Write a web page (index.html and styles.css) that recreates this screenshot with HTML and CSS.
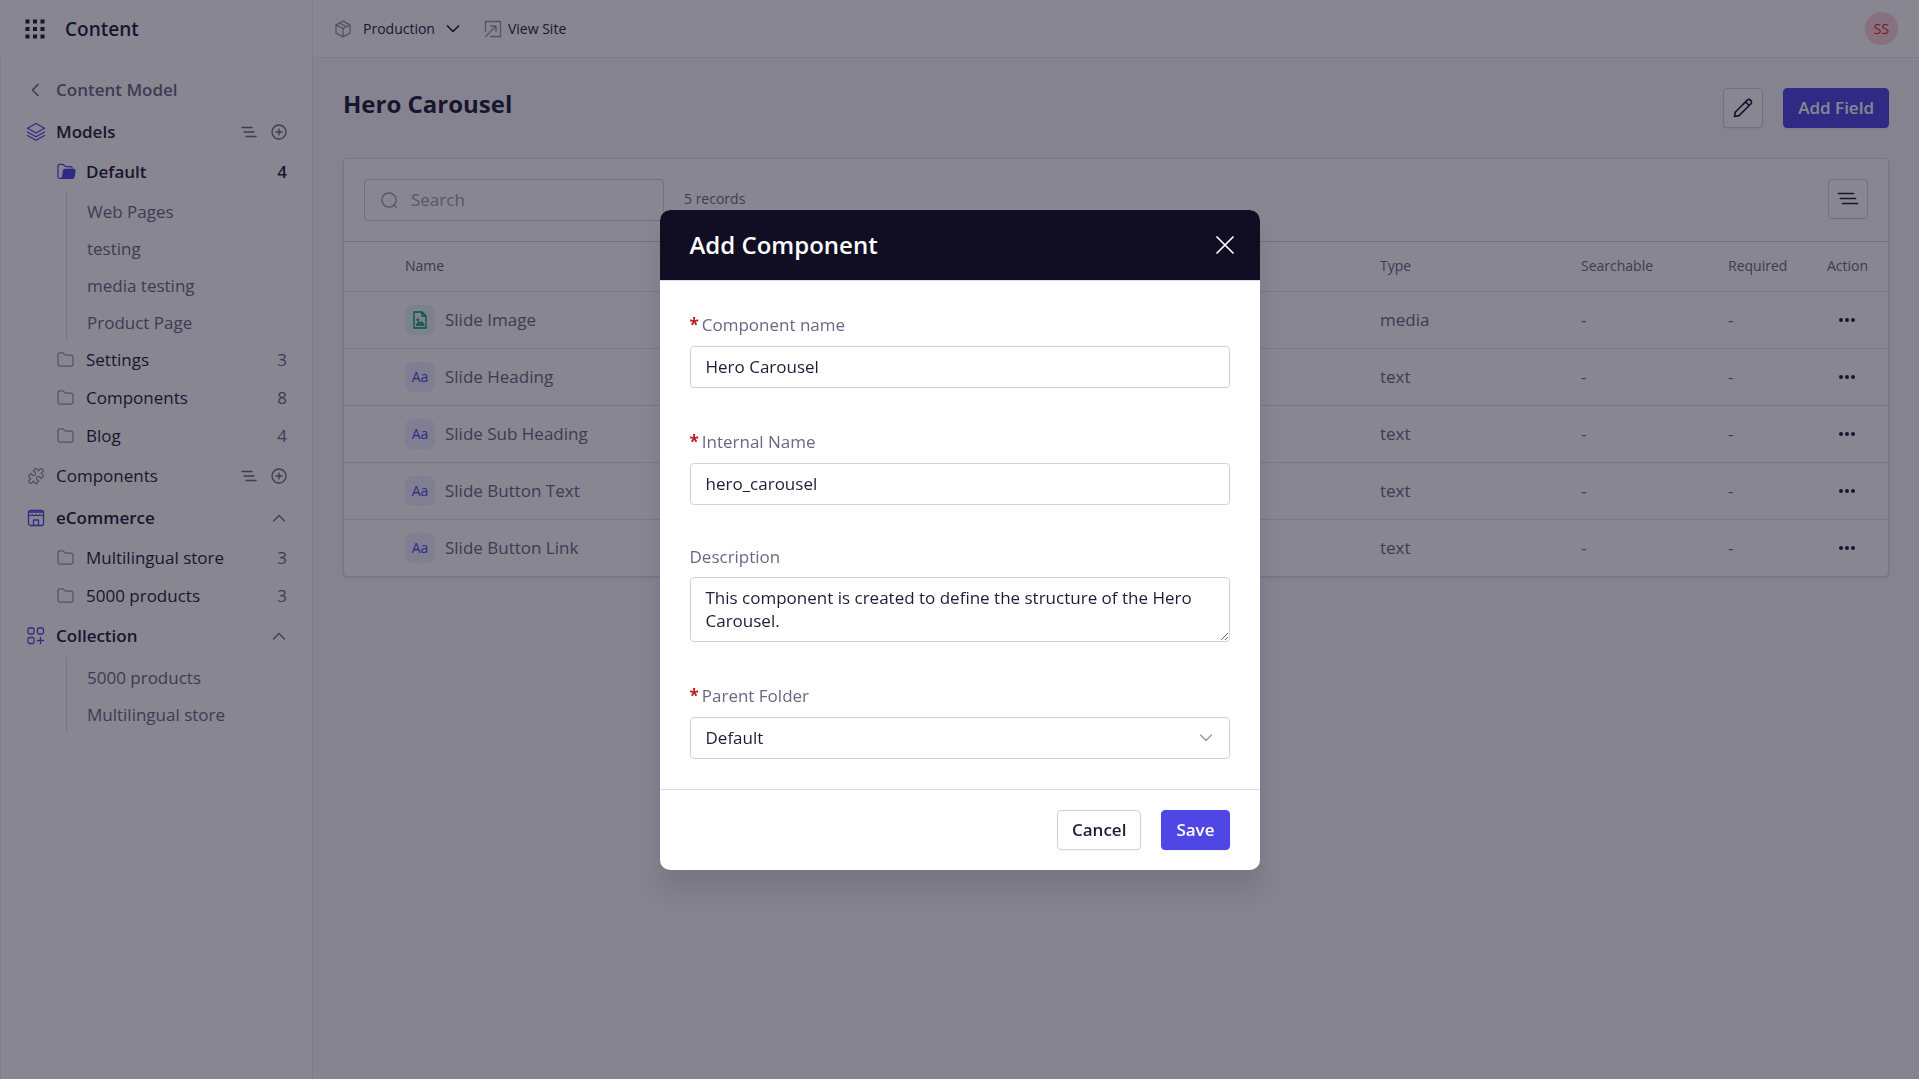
FILE: index.html
```
<!DOCTYPE html>
<html lang="en">
<head>
    <meta charset="UTF-8">
    <meta name="viewport" content="width=device-width, initial-scale=1.0">
    <title>Content - Hero Carousel</title>
    <link rel="stylesheet" href="styles.css">
</head>
<body>
    <!-- Shared icons -->
    <svg class="icon-defs" aria-hidden="true">
        <symbol id="icon-folder" viewBox="0 0 18 16">
            <path d="M1 3.2C1 1.9 1.7 1 3 1h2.6c.7 0 1.1.2 1.6.7l.9 1c.4.4.8.6 1.4.6H15c1.3 0 2 .8 2 2v7.500c0 1.300-.7 2.200-2 2.200H3c-1.300 0-2-.9-2-2.200z"/>
        </symbol>
        <symbol id="icon-sort" viewBox="0 0 16 12">
            <path d="M1 1.500h10M3 6h10M5 10.500h10"/>
        </symbol>
        <symbol id="icon-plus" viewBox="0 0 16 16">
            <circle cx="8" cy="8" r="7"/>
            <path d="M8 5v6M5 8h6"/>
        </symbol>
        <symbol id="icon-up" viewBox="0 0 14 8">
            <path d="M1.500 7 7 1.500 12.500 7"/>
        </symbol>
        <symbol id="icon-down" viewBox="0 0 14 8">
            <path d="M1.500 1 7 6.500 12.500 1"/>
        </symbol>
        <symbol id="icon-dots" viewBox="0 0 18 6">
            <circle cx="3" cy="3" r="2"/>
            <circle cx="9" cy="3" r="2"/>
            <circle cx="15" cy="3" r="2"/>
        </symbol>
    </svg>

    <div class="app">
        <aside class="sidebar">
            <div class="brand">
                <button class="icon-btn" aria-label="Apps">
                    <svg class="brand-icon" width="20" height="20" viewBox="0 0 20 20">
                        <path d="M.5.5h4v4h-4zM8 .5h4v4H8zM15.500.5h4v4h-4zM.5 8h4v4h-4zM8 8h4v4H8zM15.500 8h4v4h-4zM.5 15.500h4v4h-4zM8 15.500h4v4H8zM15.500 15.500h4v4h-4z"/>
                    </svg>
                </button>
                <span>Content</span>
            </div>

            <nav class="nav">
                <a href="#" class="back">
                    <svg class="icon" width="20" height="14" viewBox="0 0 20 14"><path d="M12 1.500 6.500 7 12 12.500"/></svg>
                    Content Model
                </a>

                <div class="nav-head">
                    <svg class="icon accent" width="20" height="20" viewBox="0 0 20 20">
                        <path d="M10 1.500 18.500 6.200 10 11 1.500 6.200zM1.500 10 10 14.700 18.500 10M1.500 13.500 10 18.300l8.500-4.800"/>
                    </svg>
                    <a href="#" class="nav-title bold">Models</a>
                    <button class="icon-btn" aria-label="Sort models"><svg class="icon" width="16" height="12"><use href="#icon-sort"/></svg></button>
                    <button class="icon-btn" aria-label="Add model"><svg class="icon" width="16" height="16"><use href="#icon-plus"/></svg></button>
                </div>
                <a href="#" class="folder active">
                    <svg class="icon accent" width="19" height="17" viewBox="0 0 20 17">
                        <path d="M4 15.800H3c-1.300 0-2-.9-2-2.200V3.200C1 1.900 1.700 1 3 1h2.600c.7 0 1.100.2 1.600.7l.9 1c.4.4.8.6 1.400.6H14c1.300 0 2 .8 2 2"/>
                        <path class="solid" d="M8 6.200h9.200c1.300 0 2 .8 1.800 2l-1 5.800c-.2 1.200-1 1.800-2 1.800H4c1.300 0 1.700-.8 1.900-2l.8-5.800c.1-1.200.3-1.800 1.300-1.800z"/>
                    </svg>
                    <span class="folder-name">Default</span>
                    <span class="count">4</span>
                </a>
                <div class="links">
                    <a href="#">Web Pages</a>
                    <a href="#">testing</a>
                    <a href="#">media testing</a>
                    <a href="#">Product Page</a>
                </div>
                <a href="#" class="folder">
                    <svg class="icon" width="17" height="15"><use href="#icon-folder"/></svg>
                    <span class="folder-name">Settings</span>
                    <span class="count">3</span>
                </a>
                <a href="#" class="folder">
                    <svg class="icon" width="17" height="15"><use href="#icon-folder"/></svg>
                    <span class="folder-name">Components</span>
                    <span class="count">8</span>
                </a>
                <a href="#" class="folder">
                    <svg class="icon" width="17" height="15"><use href="#icon-folder"/></svg>
                    <span class="folder-name">Blog</span>
                    <span class="count">4</span>
                </a>

                <div class="nav-head">
                    <svg class="icon" width="20" height="20" viewBox="0 0 20 20">
                        <path transform="rotate(45 10 10)" d="M5 4.500h2.800c.6 0 .8-.5.5-1a2 2 0 1 1 3.400 0c-.3.500-.1 1 .5 1H15q.5 0 .5.500v2.800c0 .6-.5.8-1 .5a2 2 0 1 0 0 3.400c.5-.3 1-.1 1 .5V15q0 .5-.5.5h-2.800c-.6 0-.8.5-.5 1a2 2 0 1 1-3.400 0c.3-.5.1-1-.5-1H5q-.5 0-.5-.5v-2.800c0-.6.5-.8 1-.5a2 2 0 1 0 0-3.400c-.5.3-1 .1-1-.5V5q0-.5.5-.5z"/>
                    </svg>
                    <a href="#" class="nav-title">Components</a>
                    <button class="icon-btn" aria-label="Sort components"><svg class="icon" width="16" height="12"><use href="#icon-sort"/></svg></button>
                    <button class="icon-btn" aria-label="Add component"><svg class="icon" width="16" height="16"><use href="#icon-plus"/></svg></button>
                </div>

                <div class="nav-head">
                    <svg class="icon accent" width="20" height="20" viewBox="0 0 20 20">
                        <rect x="2.500" y="2.500" width="15" height="15" rx="2"/>
                        <path d="M2.500 4h15M2.500 6.500c.8 1.600 2.600 1.600 3.700 0 1 1.600 2.800 1.600 3.800 0 1 1.600 2.800 1.600 3.800 0 1.100 1.600 2.900 1.600 3.700 0M7.500 17.500v-5.500h5v5.500"/>
                    </svg>
                    <a href="#" class="nav-title bold">eCommerce</a>
                    <button class="icon-btn" aria-label="Collapse eCommerce"><svg class="icon" width="14" height="8"><use href="#icon-up"/></svg></button>
                </div>
                <a href="#" class="folder">
                    <svg class="icon" width="17" height="15"><use href="#icon-folder"/></svg>
                    <span class="folder-name">Multilingual store</span>
                    <span class="count">3</span>
                </a>
                <a href="#" class="folder">
                    <svg class="icon" width="17" height="15"><use href="#icon-folder"/></svg>
                    <span class="folder-name">5000 products</span>
                    <span class="count">3</span>
                </a>

                <div class="nav-head">
                    <svg class="icon accent" width="20" height="20" viewBox="0 0 20 20">
                        <rect x="2" y="2" width="6" height="6" rx="1.500"/>
                        <rect x="11.500" y="2" width="6" height="6" rx="1.500"/>
                        <rect x="2" y="11.500" width="6" height="6" rx="1.500"/>
                        <path d="M14.500 11.500v6M11.500 14.500h6"/>
                    </svg>
                    <a href="#" class="nav-title bold">Collection</a>
                    <button class="icon-btn" aria-label="Collapse collection"><svg class="icon" width="14" height="8"><use href="#icon-up"/></svg></button>
                </div>
                <div class="links">
                    <a href="#">5000 products</a>
                    <a href="#">Multilingual store</a>
                </div>
            </nav>
        </aside>

        <div class="page">
            <header class="topbar">
                <button class="env-btn">
                    <svg class="icon" width="18" height="18" viewBox="0 0 18 18">
                        <path d="M9 1.200 16 4.800v8.400L9 16.800l-7-3.600V4.800zM2 4.800l7 3.600 7-3.600M9 8.400v8.400M5.500 3l7 3.600"/>
                    </svg>
                    Production
                    <svg class="icon dark" width="14" height="8"><use href="#icon-down"/></svg>
                </button>
                <a href="#" class="view-site">
                    <svg class="icon" width="18" height="18" viewBox="0 0 18 18">
                        <path d="M1.500 11.500v-10h15v15h-10M1.500 16.500l10.500-10.500M6.500 6H12v5.500"/>
                    </svg>
                    View Site
                </a>
                <button class="avatar">SS</button>
            </header>

            <main class="main">
                <div class="main-head">
                    <h1>Hero Carousel</h1>
                    <button class="square-btn" aria-label="Edit">
                        <svg class="icon dark" width="20" height="20" viewBox="0 0 20 20">
                            <path d="M1.500 18.500 2.400 14 14 2.300a2.600 2.600 0 0 1 3.700 3.700L6 17.600zM12.500 3.800l3.700 3.700"/>
                        </svg>
                    </button>
                    <button class="btn btn-primary">Add Field</button>
                </div>

                <div class="card">
                    <div class="toolbar">
                        <div class="search">
                            <svg class="icon" width="17" height="17" viewBox="0 0 18 18"><circle cx="8.500" cy="8.500" r="7.500"/><path d="m14 14 2.500 2.500"/></svg>
                            <input type="text" placeholder="Search" aria-label="Search">
                        </div>
                        <span class="records">5 records</span>
                        <button class="square-btn" aria-label="Sort fields">
                            <svg class="icon dark" width="22" height="14" viewBox="0 0 22 14"><path d="M1.500 1.500h15M3.500 6.500h15M5.500 11.500h15"/></svg>
                        </button>
                    </div>

                    <table class="fields">
                        <thead>
                            <tr>
                                <th class="col-name">Name</th>
                                <th class="col-type">Type</th>
                                <th class="col-search">Searchable</th>
                                <th class="col-required">Required</th>
                                <th class="col-action">Action</th>
                            </tr>
                        </thead>
                        <tbody>
                            <tr>
                                <td class="col-name">
                                    <div class="field-name">
                                        <span class="tag tag-media">
                                            <svg class="icon" width="14" height="18" viewBox="0 0 14 18">
                                                <path d="M1 1h8l4 4v12H1zM9 1v4h4M3.500 14l2.500-3 1.500 1.500L9 11l2 3z"/>
                                                <circle cx="4.800" cy="8.800" r=".7"/>
                                            </svg>
                                        </span>
                                        Slide Image
                                    </div>
                                </td>
                                <td>media</td>
                                <td>-</td>
                                <td>-</td>
                                <td class="col-action"><button class="icon-btn" aria-label="Actions"><svg class="dots" width="18" height="6"><use href="#icon-dots"/></svg></button></td>
                            </tr>
                            <tr>
                                <td class="col-name"><div class="field-name"><span class="tag">Aa</span>Slide Heading</div></td>
                                <td>text</td>
                                <td>-</td>
                                <td>-</td>
                                <td class="col-action"><button class="icon-btn" aria-label="Actions"><svg class="dots" width="18" height="6"><use href="#icon-dots"/></svg></button></td>
                            </tr>
                            <tr>
                                <td class="col-name"><div class="field-name"><span class="tag">Aa</span>Slide Sub Heading</div></td>
                                <td>text</td>
                                <td>-</td>
                                <td>-</td>
                                <td class="col-action"><button class="icon-btn" aria-label="Actions"><svg class="dots" width="18" height="6"><use href="#icon-dots"/></svg></button></td>
                            </tr>
                            <tr>
                                <td class="col-name"><div class="field-name"><span class="tag">Aa</span>Slide Button Text</div></td>
                                <td>text</td>
                                <td>-</td>
                                <td>-</td>
                                <td class="col-action"><button class="icon-btn" aria-label="Actions"><svg class="dots" width="18" height="6"><use href="#icon-dots"/></svg></button></td>
                            </tr>
                            <tr>
                                <td class="col-name"><div class="field-name"><span class="tag">Aa</span>Slide Button Link</div></td>
                                <td>text</td>
                                <td>-</td>
                                <td>-</td>
                                <td class="col-action"><button class="icon-btn" aria-label="Actions"><svg class="dots" width="18" height="6"><use href="#icon-dots"/></svg></button></td>
                            </tr>
                        </tbody>
                    </table>
                </div>
            </main>
        </div>
    </div>

    <!-- Add component dialog -->
    <div class="overlay">
        <form class="modal" role="dialog" aria-labelledby="modalTitle">
            <div class="modal-head">
                <h2 id="modalTitle">Add Component</h2>
                <button type="button" class="icon-btn" aria-label="Close">
                    <svg class="close-icon" width="20" height="20" viewBox="0 0 20 20"><path d="m2 2 16 16M18 2 2 18"/></svg>
                </button>
            </div>

            <div class="modal-body">
                <div class="form-group">
                    <label for="componentName" class="required">Component name</label>
                    <input type="text" id="componentName" class="control" value="Hero Carousel">
                </div>
                <div class="form-group">
                    <label for="internalName" class="required">Internal Name</label>
                    <input type="text" id="internalName" class="control" value="hero_carousel">
                </div>
                <div class="form-group">
                    <label for="description">Description</label>
                    <textarea id="description" class="control" rows="2">This component is created to define the structure of the Hero Carousel.</textarea>
                </div>
                <div class="form-group">
                    <label for="parentFolder" class="required">Parent Folder</label>
                    <div class="select-wrap">
                        <select id="parentFolder" class="control">
                            <option>Default</option>
                            <option>Settings</option>
                            <option>Components</option>
                            <option>Blog</option>
                        </select>
                        <svg class="icon" width="14" height="8"><use href="#icon-down"/></svg>
                    </div>
                </div>
            </div>

            <div class="modal-foot">
                <button type="button" class="btn">Cancel</button>
                <button type="submit" class="btn btn-primary">Save</button>
            </div>
        </form>
    </div>
</body>
</html>
```

FILE: styles.css
```
* {
    box-sizing: border-box;
}

body {
    margin: 0;
    font-family: 'Segoe UI', 'Open Sans', 'Noto Sans', sans-serif;
    font-size: 17px;
    line-height: 24px;
    color: #1f1c38;
    background-color: #f9f8fc;
}

a {
    color: inherit;
    text-decoration: none;
}

button,
input,
select,
textarea {
    font: inherit;
    color: inherit;
}

button {
    cursor: pointer;
}

/* Icons */
.icon-defs {
    display: none;
}

.icon {
    flex: none;
    fill: none;
    stroke: #9794ab;
    stroke-width: 1.3;
    stroke-linecap: round;
    stroke-linejoin: round;
}

.icon.accent {
    stroke: #4f46e5;
}

.icon.dark {
    stroke: #1f1c38;
    stroke-width: 1.7;
}

.solid {
    fill: #4f46e5;
}

.icon-btn {
    display: flex;
    align-items: center;
    padding: 0;
    border: none;
    background: none;
}

/* Layout */
.app {
    display: flex;
    min-height: 100vh;
}

.sidebar {
    flex: none;
    width: 313px;
    background-color: white;
    border-right: 1px solid #eae8f2;
}

.page {
    flex: 1;
    min-width: 0;
}

/* Sidebar */
.brand {
    display: flex;
    align-items: center;
    gap: 20px;
    height: 58px;
    padding-left: 25px;
    font-size: 19px;
    font-weight: 600;
}

.brand-icon {
    fill: #1f1c38;
}

.nav {
    min-height: calc(100vh - 58px);
    padding: 11px 25px 30px;
    border-left: 1px solid #eae8f2;
}

.back {
    display: flex;
    align-items: center;
    gap: 10px;
    height: 42px;
    font-weight: 600;
    color: #6b6884;
}

.back .icon {
    stroke: #6b6884;
    stroke-width: 1.7;
}

.nav-head {
    display: flex;
    align-items: center;
    gap: 10px;
    height: 42px;
}

.nav-head .icon-btn {
    justify-content: center;
    min-width: 16px;
}

.nav-head .icon-btn + .icon-btn {
    margin-left: 4px;
}

.nav-head .icon-btn .icon {
    stroke: #6b6884;
}

.nav-title {
    flex: 1;
}

.bold {
    font-weight: 600;
}

.folder {
    display: flex;
    align-items: center;
    gap: 12px;
    height: 38px;
    padding-left: 31px;
}

.folder .icon {
    margin-bottom: 2px;
}

.folder-name {
    flex: 1;
}

.count {
    color: #6b6884;
}

.folder.active {
    gap: 10px;
    font-weight: 600;
}

.folder.active .count {
    color: #1f1c38;
}

.links {
    margin-left: 40px;
    padding-top: 2px;
    border-left: 1px solid #dddbe8;
}

.links a {
    display: block;
    padding-left: 20px;
    line-height: 37px;
    color: #6b6884;
}

/* Top bar */
.topbar {
    display: flex;
    align-items: center;
    height: 58px;
    padding: 0 21px;
    font-size: 14px;
    background-color: white;
    border-bottom: 1px solid #eae8f2;
}

.env-btn {
    display: flex;
    align-items: center;
    gap: 11px;
    padding: 0;
    border: none;
    background: none;
}

.view-site {
    display: flex;
    align-items: center;
    gap: 6px;
    margin-left: 24px;
}

.avatar {
    width: 33px;
    height: 33px;
    margin-left: auto;
    padding: 0;
    border: none;
    border-radius: 50%;
    color: #dc2626;
    background-color: #fdd5d8;
}

/* Main */
.main {
    padding: 30px;
}

.main-head {
    display: flex;
    align-items: flex-start;
    gap: 20px;
    margin-bottom: 30px;
}

h1,
h2 {
    flex: 1;
    margin: 0;
    font-size: 24px;
    line-height: 32px;
}

.btn {
    height: 40px;
    padding: 0 14px;
    font-weight: 600;
    background-color: white;
    border: 1px solid #d2d0de;
    border-radius: 4px;
    box-shadow: 0 1px 2px rgba(0, 0, 0, 0.05);
}

.btn-primary {
    color: white;
    background-color: #4f46e5;
    border-color: #4f46e5;
}

.square-btn {
    display: flex;
    align-items: center;
    justify-content: center;
    width: 40px;
    height: 40px;
    padding: 0;
    background-color: white;
    border: 1px solid #d2d0de;
    border-radius: 4px;
    box-shadow: 0 1px 2px rgba(0, 0, 0, 0.05);
}

.card {
    background-color: white;
    border: 1px solid #dddbe8;
    border-radius: 4px;
    box-shadow: 0 1px 3px rgba(0, 0, 0, 0.1);
}

.toolbar {
    display: flex;
    gap: 20px;
    padding: 20px;
    border-bottom: 1px solid #d2d0de;
}

.search {
    display: flex;
    align-items: center;
    gap: 13px;
    width: 300px;
    height: 42px;
    padding: 0 16px;
    border: 1px solid #d2d0de;
    border-radius: 4px;
}

.search input {
    flex: 1;
    min-width: 0;
    padding: 0;
    border: none;
    outline: none;
    background: none;
}

.search input::placeholder {
    color: #a09db2;
}

.records {
    flex: 1;
    font-size: 14px;
    line-height: 40px;
    color: #6b6884;
}

/* Fields table */
.fields {
    width: 100%;
    border-collapse: collapse;
    table-layout: fixed;
    color: #6b6884;
}

.fields th {
    height: 49px;
    padding: 0;
    font-size: 14px;
    font-weight: 400;
    text-align: left;
}

.fields td {
    height: 57px;
    padding: 0;
    border-top: 1px solid #e4e2ec;
}

.fields .col-name {
    padding-left: 61px;
}

.fields th.col-type {
    width: 201px;
}

.fields th.col-search {
    width: 147px;
}

.fields th.col-required {
    width: 99px;
}

.fields th.col-action {
    width: 61px;
}

td.col-action .icon-btn {
    margin-left: 11px;
}

.field-name {
    display: flex;
    align-items: center;
    gap: 10px;
}

.tag {
    display: flex;
    align-items: center;
    justify-content: center;
    width: 30px;
    height: 30px;
    font-size: 14px;
    color: #4f46e5;
    background-color: #eeeffe;
    border-radius: 8px;
}

.tag-media {
    background-color: #e6f6f1;
}

.tag-media .icon {
    stroke: #059669;
}

.dots {
    fill: #1f1c38;
}

/* Modal */
.overlay {
    position: fixed;
    inset: 0;
    display: flex;
    align-items: center;
    justify-content: center;
    background-color: rgba(17, 14, 36, 0.5);
}

.modal {
    width: 600px;
    max-width: 100%;
    background-color: white;
    border-radius: 10px;
    box-shadow: 0 20px 25px rgba(0, 0, 0, 0.1);
    overflow: hidden;
}

.modal-head {
    display: flex;
    align-items: center;
    height: 70px;
    padding: 0 25px 0 30px;
    color: white;
    background-color: #110e24;
}

.modal-head h2 {
    font-weight: 600;
}

.close-icon {
    fill: none;
    stroke: white;
    stroke-width: 1.7;
    stroke-linecap: round;
}

.modal-body {
    display: flex;
    flex-direction: column;
    gap: 40px;
    padding: 30px;
    border-top: 1px solid #dddbe8;
}

.form-group {
    display: flex;
    flex-direction: column;
    gap: 8px;
}

label {
    color: #6b6884;
}

label.required {
    line-height: 27px;
}

label.required::before {
    content: '*';
    margin-right: 3px;
    font-weight: 700;
    color: #b91c1c;
}

.control {
    display: block;
    width: 100%;
    height: 42px;
    padding: 8px 15px;
    background-color: white;
    border: 1px solid #d2d0de;
    border-radius: 4px;
    outline: none;
}

textarea.control {
    height: 65px;
    line-height: 23px;
    resize: vertical;
}

.select-wrap {
    position: relative;
}

select.control {
    appearance: none;
}

.select-wrap .icon {
    position: absolute;
    top: 17px;
    right: 17px;
}

.modal-foot {
    display: flex;
    justify-content: flex-end;
    gap: 20px;
    padding: 20px 30px;
    border-top: 1px solid #dddbe8;
}
```
